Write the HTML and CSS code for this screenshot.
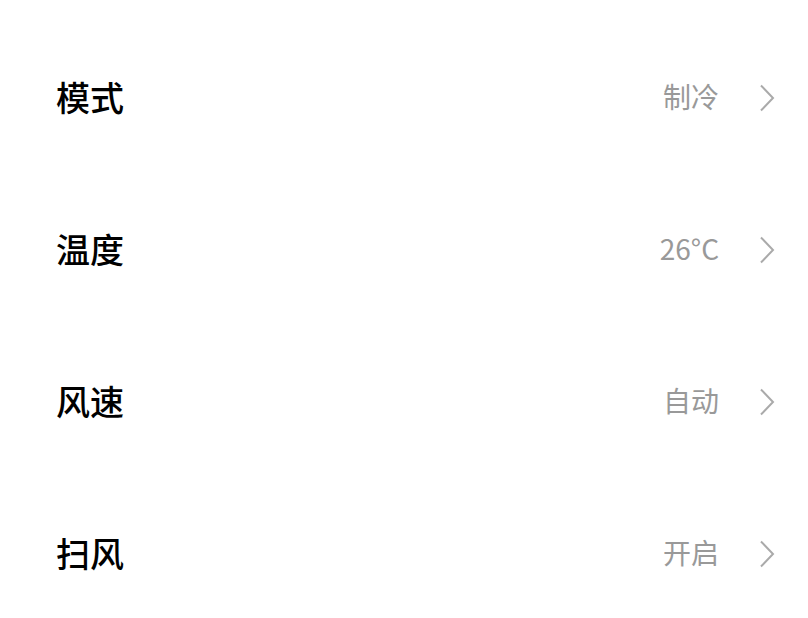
FILE: index.html
```html
<!DOCTYPE html>
<html lang="zh-CN">
<head>
    <meta charset="UTF-8">
    <meta name="viewport" content="width=device-width, initial-scale=1.0">
    <title>空调设置</title>
    <link rel="stylesheet" href="styles.css">
</head>
<body>
    <div class="settings">
        <div class="row">
            <span class="label">模式</span>
            <span class="value">制冷</span>
            <svg class="arrow" viewBox="0 0 16 28"><path d="M2 1.5 L14 14 L2 26.5"/></svg>
        </div>
        <div class="row">
            <span class="label">温度</span>
            <span class="value">26°C</span>
            <svg class="arrow" viewBox="0 0 16 28"><path d="M2 1.5 L14 14 L2 26.5"/></svg>
        </div>
        <div class="row">
            <span class="label">风速</span>
            <span class="value">自动</span>
            <svg class="arrow" viewBox="0 0 16 28"><path d="M2 1.5 L14 14 L2 26.5"/></svg>
        </div>
        <div class="row">
            <span class="label">扫风</span>
            <span class="value">开启</span>
            <svg class="arrow" viewBox="0 0 16 28"><path d="M2 1.5 L14 14 L2 26.5"/></svg>
        </div>
    </div>
</body>
</html>
```

FILE: styles.css
```css
body {
    margin: 0;
    padding: 0;
    background-color: #ffffff;
    font-family: "Noto Sans CJK SC", "Noto Sans", sans-serif;
}

.settings {
    padding: 20px 33px 0 56px;
}

.row {
    display: flex;
    align-items: center;
    height: 152px;
}

.label {
    flex: 1;
    font-size: 34px;
    font-weight: 500;
    color: #000000;
}

.value {
    font-size: 28px;
    color: #999999;
}

.arrow {
    width: 16px;
    height: 28px;
    margin-left: 40px;
    margin-top: 4px;
    fill: none;
    stroke: #aaaaaa;
    stroke-width: 2;
}
```
